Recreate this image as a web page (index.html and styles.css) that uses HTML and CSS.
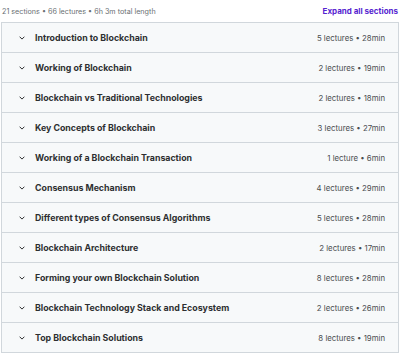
FILE: index.html
```html
<!DOCTYPE html>
<html lang="en">
<head>
    <meta charset="UTF-8">
    <meta name="viewport" content="width=device-width, initial-scale=1.0">
    <title>Course content</title>
    <link rel="stylesheet" href="styles.css">
</head>
<body>
    <div class="curriculum">
        <div class="summary">
            <span class="summary-text">21 sections • 66 lectures • 6h 3m total length</span>
            <button class="expand-btn">Expand all sections</button>
        </div>
        <div class="sections" id="sections"></div>
    </div>

    <script>
        const sections = [
            ['Introduction to Blockchain', '5 lectures • 28min'],
            ['Working of Blockchain', '2 lectures • 19min'],
            ['Blockchain vs Traditional Technologies', '2 lectures • 18min'],
            ['Key Concepts of Blockchain', '3 lectures • 27min'],
            ['Working of a Blockchain Transaction', '1 lecture • 6min'],
            ['Consensus Mechanism', '4 lectures • 29min'],
            ['Different types of Consensus Algorithms', '5 lectures • 28min'],
            ['Blockchain Architecture', '2 lectures • 17min'],
            ['Forming your own Blockchain Solution', '8 lectures • 28min'],
            ['Blockchain Technology Stack and Ecosystem', '2 lectures • 26min'],
            ['Top Blockchain Solutions', '8 lectures • 19min']
        ];

        document.getElementById('sections').innerHTML = sections
            .map(([title, meta]) => `
                <div class="section-row">
                    <svg class="chevron" viewBox="0 0 6 4" width="6" height="4">
                        <path d="M0.6 0.7 L3 3.1 L5.4 0.7" fill="none" stroke="#2d2f31" stroke-width="1"/>
                    </svg>
                    <span class="section-title">${title}</span>
                    <span class="section-meta">${meta}</span>
                </div>
            `)
            .join('');
    </script>
</body>
</html>
```

FILE: styles.css
```css
:root {
    --text-color: #2d2f31;
    --muted-text: #6a6f73;
    --row-bg: #f7f9fa;
    --border-color: #d1d7dc;
    --accent: #5624d0;
}

body {
    font-family: Inter, "Noto Sans", sans-serif;
    color: var(--text-color);
    background: #fff;
    margin: 0;
    padding: 0 1px;
}

.summary {
    display: flex;
    justify-content: space-between;
    align-items: center;
    height: 22px;
    padding: 0 1px 0 1px;
}

.summary-text {
    font-size: 7.2px;
    color: var(--muted-text);
}

.expand-btn {
    font-family: inherit;
    font-size: 8px;
    font-weight: 700;
    color: var(--accent);
    background: none;
    border: none;
    padding: 0;
}

.sections {
    border: 1px solid var(--border-color);
    border-bottom: none;
}

.section-row {
    display: flex;
    align-items: center;
    height: 29px;
    padding: 0 13px 0 17px;
    background: var(--row-bg);
    border-bottom: 1px solid var(--border-color);
}

.chevron {
    flex-shrink: 0;
    margin-right: 10px;
}

.section-title {
    flex: 1;
    font-size: 8.8px;
    font-weight: 700;
}

.section-meta {
    font-size: 7.8px;
    color: #4a4d50;
}
```
